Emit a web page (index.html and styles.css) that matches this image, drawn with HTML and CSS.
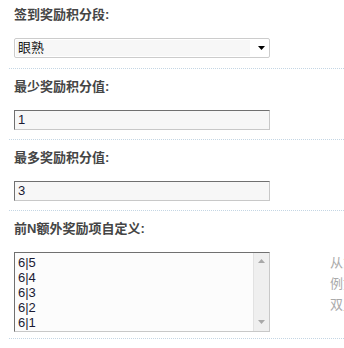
FILE: index.html
```html
<!DOCTYPE html>
<html lang="zh-CN">
<head>
  <meta charset="UTF-8">
  <title>签到奖励设置</title>
  <link rel="stylesheet" href="styles.css">
</head>
<body>
  <div class="settings">
    <div class="row row-first">
      <div class="label">签到奖励积分段:</div>
      <div class="select">
        <span class="select-value">眼熟</span>
        <span class="select-arrow">
          <svg width="7" height="4" viewBox="0 0 7 4"><path d="M0 0H7L3.5 4Z" fill="#000"/></svg>
        </span>
      </div>
    </div>

    <div class="row">
      <div class="label">最少奖励积分值:</div>
      <div class="input">1</div>
    </div>

    <div class="row">
      <div class="label">最多奖励积分值:</div>
      <div class="input">3</div>
    </div>

    <div class="row row-area">
      <div class="label">前N额外奖励项自定义:</div>
      <div class="field-row">
        <div class="textarea">
          <div class="textarea-text">6|5
6|4
6|3
6|2
6|1</div>
          <div class="scrollbar">
            <svg width="7" height="4" viewBox="0 0 7 4"><path d="M0 4H7L3.5 0Z" fill="#a8a8a8"/></svg>
            <svg width="7" height="4" viewBox="0 0 7 4"><path d="M0 0H7L3.5 4Z" fill="#a8a8a8"/></svg>
          </div>
        </div>
        <div class="hint">
          从第1名开始，每行一项<br>
          例如：6|5 表示第6天奖励5分<br>
          双竖线前为天数，后为积分
        </div>
      </div>
    </div>
  </div>
</body>
</html>
```

FILE: styles.css
```css
body {
  margin: 0;
  background: #fff;
  color: #333;
  font-family: "Liberation Sans", "Noto Sans CJK SC", sans-serif;
  font-size: 13px;
  overflow: hidden;
}

.settings {
  padding-left: 9px;
}

.row {
  padding: 8px 0 9px 5px;
  border-bottom: 1px dotted #c4d6e4;
}

.row-first {
  padding-top: 5px;
  padding-bottom: 10px;
}

.row-area {
  padding-bottom: 6px;
}

.label {
  font-weight: bold;
  color: #454545;
  line-height: 20px;
  margin-bottom: 13px;
  white-space: nowrap;
}

.select {
  width: 256px;
  height: 20px;
  box-sizing: border-box;
  border: 1px solid #ccc;
  border-radius: 2px;
  padding: 1px;
  display: flex;
  align-items: center;
  background: #fff;
}

.select-value {
  width: 234px;
  height: 16px;
  line-height: 16px;
  padding-left: 2px;
  box-sizing: border-box;
  background: #f7f7f7;
  color: #111;
}

.select-arrow {
  flex: 1;
  display: flex;
  justify-content: flex-end;
  padding-right: 3px;
}

.input {
  width: 256px;
  height: 20px;
  box-sizing: border-box;
  border: 1px solid;
  border-color: #707070 #c8c8c8 #c8c8c8 #707070;
  background: #f7f7f7;
  padding: 0 3px;
  line-height: 18px;
  color: #1a1a33;
}

.field-row {
  display: flex;
  align-items: flex-start;
}

.textarea {
  display: flex;
  width: 256px;
  height: 80px;
  box-sizing: border-box;
  border: 1px solid;
  border-color: #707070 #c8c8c8 #c8c8c8 #707070;
  background: #fcfcfc;
  flex-shrink: 0;
}

.textarea-text {
  flex: 1;
  padding: 2px 3px;
  line-height: 15px;
  white-space: pre;
  color: #1a1a33;
  overflow: hidden;
}

.scrollbar {
  width: 16px;
  background: #efefef;
  border-left: 1px solid #e2e2e2;
  display: flex;
  flex-direction: column;
  justify-content: space-between;
  align-items: center;
  padding: 6px 0 7px;
  box-sizing: border-box;
}

.hint {
  margin-left: 60px;
  color: #aaa;
  line-height: 21px;
  white-space: nowrap;
}
```
